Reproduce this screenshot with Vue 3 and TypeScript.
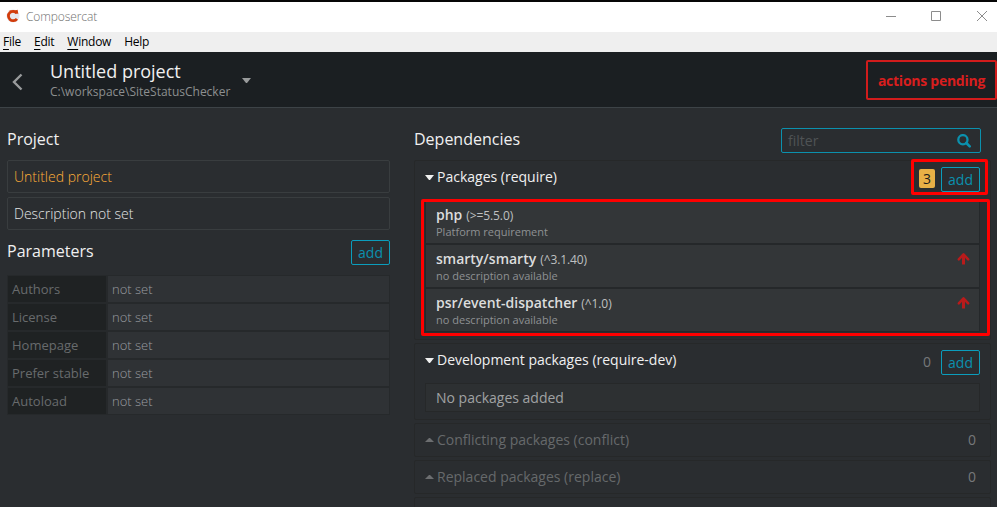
<script setup lang="ts">
interface Parameter {
  label: string
  value: string
}
interface Dependency {
  name: string
  version: string
  description: string
  update: boolean
}

const menu: string[] = ['File', 'Edit', 'Window', 'Help']
const parameters: Parameter[] = [
  { label: 'Authors', value: 'not set' },
  { label: 'License', value: 'not set' },
  { label: 'Homepage', value: 'not set' },
  { label: 'Prefer stable', value: 'not set' },
  { label: 'Autoload', value: 'not set' },
]
const packages: Dependency[] = [
  { name: 'php', version: '(>=5.5.0)', description: 'Platform requirement', update: false },
  { name: 'smarty/smarty', version: '(^3.1.40)', description: 'no description available', update: true },
  { name: 'psr/event-dispatcher', version: '(^1.0)', description: 'no description available', update: true },
]
const collapsed: string[] = ['Conflicting packages (conflict)', 'Replaced packages (replace)']
</script>

<template>
  <div class="app-window">
    <header class="titlebar">
      <svg class="logo" width="14" height="14" viewBox="0 0 14 14">
        <circle cx="7" cy="7" r="6.5" fill="#e6e6ec" />
        <path d="M10.900 4.200A4.700 4.700 0 1 0 10.900 9.800" fill="none" stroke="#d23c0c" stroke-width="2.800" />
        <path d="M2.500 1l2.500 .6h4l2.600-.8 .7 4-2.800-.4z" fill="#d23c0c" />
      </svg>
      <span class="app-name">Composercat</span>
      <svg class="controls" width="103" height="12" viewBox="0 0 103 12">
        <path d="M0 6.500h10M45.500 1.500h9v9h-9zM91 1l10 10M101 1l-10 10" fill="none" stroke="#8c8c8c" />
      </svg>
    </header>
    <nav class="menubar">
      <span v-for="item in menu" :key="item" :class="['menu-item', 'menu-' + item.toLowerCase()]"><span class="key">{{ item[0] }}</span>{{ item.slice(1) }}</span>
    </nav>
    <div class="header">
      <svg class="back" width="12" height="18" viewBox="0 0 12 18">
        <path d="M10.500 1.500L3 9l7.500 7.500" fill="none" stroke="#999b9c" stroke-width="2.400" />
      </svg>
      <div class="project">
        <div class="project-name"><span>Untitled project</span></div>
        <div class="project-path"><span>C:\workspace\SiteStatusChecker</span></div>
      </div>
      <i class="caret down header-caret"></i>
      <button class="pending">actions pending</button>
    </div>
    <main class="content">
      <section class="left">
        <h2 class="t-project"><span>Project</span></h2>
        <div class="field name"><span>Untitled project</span></div>
        <div class="field"><span>Description not set</span></div>
        <div class="section-head">
          <h2><span>Parameters</span></h2>
          <button class="add">add</button>
        </div>
        <div class="table">
          <div v-for="p in parameters" :key="p.label" class="row">
            <div class="label"><span>{{ p.label }}</span></div>
            <div class="value"><span>{{ p.value }}</span></div>
          </div>
        </div>
      </section>
      <section class="right">
        <div class="dep-head">
          <h2><span>Dependencies</span></h2>
          <div class="filter">
            <span>filter</span>
            <svg width="14" height="14" viewBox="0 0 14 14">
              <circle cx="5.900" cy="5.700" r="4.600" fill="none" stroke="#0b91ae" stroke-width="2.300" />
              <path d="M9.300 9l3.400 3.400" stroke="#0b91ae" stroke-width="2.600" stroke-linecap="round" />
            </svg>
          </div>
        </div>
        <div class="panel">
          <div class="panel-head">
            <i class="caret down"></i>
            <span class="panel-title">Packages (require)</span>
            <span class="badge">3</span>
            <button class="add">add</button>
            <div class="mark mark-count"></div>
          </div>
          <div class="list">
            <div v-for="d in packages" :key="d.name" class="item">
              <div class="item-text">
                <div class="item-title"><b>{{ d.name }}</b><span class="version">{{ d.version }}</span></div>
                <div class="desc"><span>{{ d.description }}</span></div>
              </div>
              <svg v-if="d.update" class="arrow" width="13" height="13" viewBox="0 0 13 13">
                <path d="M1.800 7.300L6.500 2.400 11.200 7.300" fill="none" stroke="#b91b1b" stroke-width="2.500" stroke-linecap="round" stroke-linejoin="round" />
                <path d="M6.500 3V12.500" stroke="#b91b1b" stroke-width="3" />
              </svg>
            </div>
            <div class="mark mark-list"></div>
          </div>
        </div>
        <div class="panel dev">
          <div class="panel-head">
            <i class="caret down"></i>
            <span class="panel-title">Development packages (require-dev)</span>
            <span class="zero">0</span>
            <button class="add">add</button>
          </div>
          <div class="empty"><span>No packages added</span></div>
        </div>
        <div v-for="c in collapsed" :key="c" class="panel closed">
          <i class="caret up"></i>
          <span class="panel-title">{{ c }}</span>
          <span class="zero">0</span>
        </div>
        <div class="panel closed"></div>
      </section>
    </main>
  </div>
</template>

<style>
body {
  background: #2a2d30;
}
</style>

<style scoped>
* {
  box-sizing: border-box;
}
.app-window {
  width: 997px;
  height: 507px;
  overflow: hidden;
  display: flex;
  flex-direction: column;
  background: #2a2d30;
  font-family: 'Open Sans', sans-serif;
  font-size: 14px;
  color: #c8c9ca;
  white-space: nowrap;
}
.titlebar {
  height: 32px;
  flex: none;
  display: flex;
  align-items: center;
  border-top: 2px solid #060606;
  padding: 0 8px 2px 6px;
  background: #fff;
}
.app-name {
  margin-left: 6px;
  font-size: 12px;
  font-weight: 300;
  letter-spacing: -0.1px;
  color: #707070;
  flex: 1;
}
.menubar {
  height: 20px;
  flex: none;
  display: flex;
  gap: 13px;
  padding-left: 3px;
  background: #efefef;
  color: #000;
  font-size: 12px;
  line-height: 20px;
  letter-spacing: -0.25px;
}
.key {
  text-decoration: underline;
  text-decoration-thickness: 1px;
  text-underline-offset: 3px;
}
.menu-help .key {
  text-decoration: none;
}
.header {
  height: 56px;
  flex: none;
  display: flex;
  background: #1b1f22;
  border-bottom: 1px solid #3d4347;
}
.back {
  margin: 21px 0 0 11px;
}
.project {
  width: 180px;
  margin: 7px 0 0 27px;
}
.project-name {
  font-size: 18px;
  line-height: 24px;
  color: #f0f0f0;
}
.project-path {
  padding-top: 1px;
  font-size: 12px;
  line-height: 16px;
  color: #8d8f90;
}
.caret {
  border: 4.5px solid transparent;
  width: 9px;
  flex: none;
}
.caret.down {
  border-top-color: #f0f0f0;
  border-top-width: 5px;
  border-bottom: 0;
}
.caret.up {
  border-bottom-color: #6c6e70;
  border-top: 0;
}
.caret.header-caret {
  margin: 26px 0 0 12px;
  height: 5px;
  border-top-color: #999b9c;
}
.pending {
  margin: 8px 0 0 auto;
  width: 131px;
  height: 40px;
  padding: 0;
  border: 2px solid #d11c1c;
  border-radius: 2px;
  background: none;
  color: #d81e1e;
  font: bold 14px 'Open Sans', sans-serif;
  letter-spacing: -0.26px;
}
.content {
  flex: 1;
  display: flex;
  gap: 24px;
  padding-left: 7px;
}
h2 {
  margin: 0;
  font-size: 16px;
  font-weight: 400;
  line-height: 22px;
  color: #f0f0f0;
}
.left {
  width: 383px;
  padding-top: 20px;
}
.t-project {
  margin-bottom: 10px;
}
.field {
  height: 33px;
  margin-bottom: 4px;
  padding-left: 6px;
  border: 1px solid #393d3f;
  border-radius: 2px;
  font-weight: 300;
  line-height: 31px;
  color: #e4e5e6;
}
.field.name {
  color: #ffad38;
}
.section-head {
  display: flex;
  align-items: flex-start;
  justify-content: space-between;
  padding-top: 6px;
  height: 41px;
}
.add {
  width: 39px;
  height: 25px;
  padding: 0;
  border: 1px solid #0b9dbc;
  border-radius: 2px;
  background: none;
  color: #0b91ae;
  font: 14px/22px 'Open Sans', sans-serif;
}
.table {
  display: flex;
  flex-direction: column;
  gap: 2px;
  padding: 1px;
  background: #26292b;
  font-size: 13px;
  line-height: 26px;
  color: #686b6d;
}
.row {
  display: flex;
  gap: 2px;
}
.label {
  width: 98px;
  padding-left: 4px;
  background: #1f2223;
}
.value {
  flex: 1;
  padding-left: 4px;
  background: #2f3235;
  font-weight: 300;
  color: #9a9da0;
}
.right {
  width: 577px;
  padding-top: 20px;
}
.dep-head {
  display: flex;
  justify-content: space-between;
  height: 32px;
  padding-right: 10px;
}
.filter {
  width: 200px;
  height: 25px;
  display: flex;
  align-items: center;
  justify-content: space-between;
  padding: 0 9px 0 6px;
  border: 1px solid #0b91ae;
  border-radius: 2px;
  color: #4f5355;
}
.panel {
  height: 180px;
  margin-bottom: 3px;
  padding: 0 10px;
  border: 1px solid #262829;
  border-radius: 2px;
}
.panel-head {
  position: relative;
  display: flex;
  align-items: flex-start;
  height: 39px;
}
.panel-head .caret {
  margin-top: 14px;
}
.panel-title {
  flex: 1;
  margin-left: 3px;
  line-height: 31px;
  color: #f0f0f0;
}
.badge {
  width: 16px;
  height: 19px;
  margin: 8px 6px 0 0;
  border-radius: 2px;
  background: #e8b046;
  color: #1b1b1b;
  text-align: center;
  line-height: 20px;
}
.panel-head .add {
  margin-top: 6px;
}
.mark {
  position: absolute;
  border: 3px solid #f00;
  border-radius: 2px;
  pointer-events: none;
}
.mark-count {
  top: -2px;
  right: -8px;
  width: 77px;
  height: 36px;
}
.list {
  position: relative;
  display: flex;
  flex-direction: column;
  gap: 2px;
  padding: 1px;
  background: #25282a;
}
.mark-list {
  inset: -1px -10px -4px -4px;
}
.item {
  display: flex;
  justify-content: space-between;
  height: 42px;
  padding: 5px 9px 0 10px;
  background: #333638;
}
.item-title {
  line-height: 18px;
  display: flex;
}
.item-title b {
  font-weight: 600;
  color: #dcdddd;
}
.version {
  margin-left: 4px;
  font-size: 12px;
  line-height: 19px;
  letter-spacing: -0.1px;
  color: #bfc0c1;
}
.desc {
  font-size: 11px;
  line-height: 14px;
  color: #8e9193;
}
.arrow {
  margin-top: 2px;
}
.dev {
  height: 77px;
}
.zero {
  margin-right: 10px;
  color: #76787a;
}
.dev .zero {
  line-height: 35px;
}
.dev .panel-title {
  line-height: 32px;
}
.empty {
  height: 29px;
  padding-left: 10px;
  border: 1px solid #262829;
  background: #2d3032;
  line-height: 28px;
  color: #a0a2a3;
}
.closed {
  display: flex;
  align-items: flex-start;
  height: 34px;
}
.closed .caret {
  margin-top: 14px;
}
.closed .panel-title {
  line-height: 31px;
  color: #66696b;
}
.closed .zero {
  margin-right: 4px;
  line-height: 31px;
}
</style>
